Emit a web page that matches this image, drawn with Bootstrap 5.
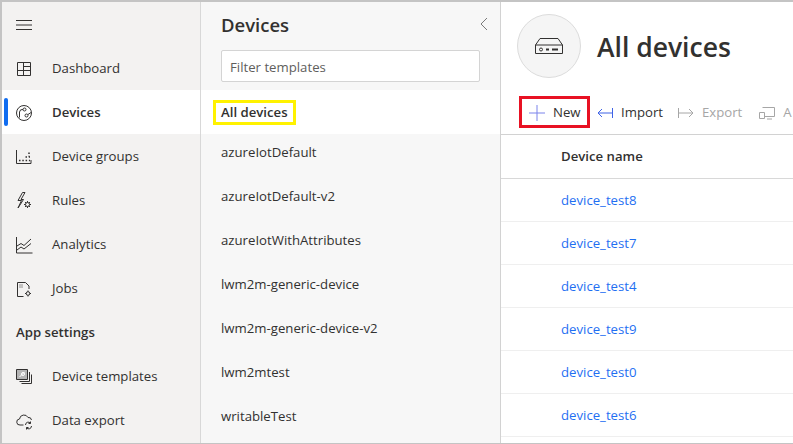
<!DOCTYPE html>
<html lang="en">
<head>
  <meta charset="UTF-8" />
  <title>All devices</title>
  <link href="https://cdn.jsdelivr.net/npm/bootstrap@5.3.0/dist/css/bootstrap.min.css" rel="stylesheet">
  <style>
    html, body { height: 100%; overflow: hidden; }
    body { font-family: "Open Sans", "Noto Sans", "Liberation Sans", sans-serif; font-size: 13.2px; color: #323130; background: #fff; }
    svg { display: block; fill: none; stroke: #323130; stroke-width: 1; }
    .app-frame { width: 793px; height: 444px; border: solid #c4c4c4; border-width: 2px 0 1px 2px; }
    .side-nav { width: 199px; background: #f3f2f1; border-right: 1px solid #d8d8d8; }
    .nav-item-row { height: 44px; padding: 2px 0 0 14px; gap: 18px; color: #323130; text-decoration: none; position: relative; }
    .nav-item-row.is-active { background: #fff; font-weight: 600; }
    .nav-item-row.is-active::before { content: ""; position: absolute; left: 2px; top: 8px; bottom: 8px; width: 4px; border-radius: 2px; background: #0f6cf0; }
    .nav-heading { height: 44px; padding: 2px 0 0 14px; font-weight: 600; }
    .menu-btn { height: 44px; padding: 2px 0 0 14px; }
    .icon-box { width: 18px; height: 18px; flex: none; }
    .template-panel { width: 300px; background: #f7f7f7; border-right: 1px solid #d2d2d2; overflow: hidden; }
    .panel-head { height: 88px; padding: 0 20px; position: relative; flex: none; }
    .panel-title { font-size: 18.5px; font-weight: 600; line-height: 24px; padding-top: 11px; margin: 0 0 13px; }
    .panel-collapse { position: absolute; right: 11px; top: 15px; }
    .filter-box { height: 32px; border-radius: 2px; border: 1px solid #d4d4d4; font-size: 13.2px; padding: 2px 8px 0; color: #605e5c; }
    .filter-box::placeholder { color: #605e5c; }
    .template-list { margin-top: -4px; }
    .template-row { height: 44px; padding: 2px 0 0 20px; color: #323130; flex: none; }
    .template-row.is-active { background: #fff; font-weight: 600; padding-left: 12px; position: relative; z-index: 1; padding-top: 0; }
    .yellow-outline { border: 3px solid #fff200; padding: 1px 5px; line-height: 17px; }
    .main-pane { min-width: 0; overflow: hidden; }
    .page-head { height: 88px; padding-left: 16px; gap: 16px; }
    .device-circle { width: 64px; height: 64px; border-radius: 50%; background: #f5f5f5; border: 1px solid #dcdcdc; margin-top: 12px; }
    .page-title { font-size: 26.5px; font-weight: 600; margin: 0; line-height: 34px; margin-top: 28px; }
    .tool-bar { height: 45px; border-bottom: 1px solid #d2d2d2; white-space: nowrap; padding: 0 0 0 18px; }
    .red-outline { border: 3px solid #e81123; height: 32px; width: 71px; flex: none; padding: 2px 0 0 7px; gap: 8px; }
    .tool-item { padding: 2px 0 0 7px; gap: 8px; flex: none; }
    .tool-item.is-off { color: #a6a6a6; padding-left: 15px; }
    .table-head { height: 44px; padding: 0 0 0 60px; font-weight: 600; border-bottom: 1px solid #d8d8d8; }
    .device-row { height: 43px; padding: 2px 0 0 60px; border-bottom: 1px solid #efefef; }
    .device-row a { color: #1f6ff2; text-decoration: none; }
  </style>
</head>
<body>
  <div class="app-frame d-flex">
    <nav class="side-nav d-flex flex-column flex-shrink-0">
      <div class="menu-btn d-flex align-items-center">
        <svg class="icon-box" viewBox="0 0 18 18"><path d="M0 4.500h16M0 9h16M0 13.500h16"/></svg>
      </div>
      <a class="nav-item-row d-flex align-items-center" href="#">
        <svg class="icon-box" viewBox="0 0 18 18"><path d="M1.500 2.500h13v13h-13zM7.500 2.500v13M7.500 6.500h7M1.500 10.500h13"/></svg>
        Dashboard
      </a>
      <a class="nav-item-row is-active d-flex align-items-center" href="#">
        <svg class="icon-box" viewBox="0 0 18 18"><circle cx="8" cy="9" r="7.500"/><circle cx="8.500" cy="5.500" r="1.500"/><circle cx="10.500" cy="11.500" r="1.500"/><path d="M3.500 13.500V8a3 3 0 0 1 3.500-2.500M12 10.500l3-2"/></svg>
        Devices
      </a>
      <a class="nav-item-row d-flex align-items-center" href="#">
        <svg class="icon-box" viewBox="0 0 18 18"><path d="M.5 2v13.500h14.500V12"/><path stroke-width="1.500" stroke-dasharray="1.500 1.800" d="M3 12.500h11M9.500 9h4.500M13 4.500v4"/></svg>
        Device groups
      </a>
      <a class="nav-item-row d-flex align-items-center" href="#">
        <svg class="icon-box" viewBox="0 0 18 18"><path d="M6.500 .5L2 8.500h3.500L2 16l5.500-8.500H5L9 .5z"/><circle cx="11.500" cy="12.500" r="2"/><path d="M11.500 9v1.500M11.500 14.500V16M8 12.500h1.500M13.500 12.500H15M9 10l1 1M13 14l1 1M14 10l-1 1M10 14l-1 1"/></svg>
        Rules
      </a>
      <a class="nav-item-row d-flex align-items-center" href="#">
        <svg class="icon-box" viewBox="0 0 18 18"><path d="M.5 1v16h16"/><path d="M1 10l4-2.500 3 2 7-6.500M1 14l4-3 3 2 7-5.500"/></svg>
        Analytics
      </a>
      <a class="nav-item-row d-flex align-items-center" href="#">
        <svg class="icon-box" viewBox="0 0 18 18"><path d="M7.500 16.500h-6v-14h8l3.500 3.500v3"/><path d="M3.500 5h4M3.500 7h4" stroke-dasharray="1 1"/><circle cx="12" cy="13.500" r="1.800"/><path d="M12 10.500v1.200M12 15.300v1.200M9 13.500h1.200M13.800 13.500H15"/></svg>
        Jobs
      </a>
      <div class="nav-heading d-flex align-items-center">App settings</div>
      <a class="nav-item-row d-flex align-items-center" href="#">
        <svg class="icon-box" viewBox="0 0 18 18"><path d="M.5 1.500h11v10H.5z" fill="#b5b5b5"/><path d="M13.500 4v9.500h-10M15.500 6.500v9h-10"/><path d="M3.500 9l5-5" stroke="#fff"/><circle cx="7" cy="6" r="1.500" stroke="#fff"/></svg>
        Device templates
      </a>
      <a class="nav-item-row d-flex align-items-center" href="#">
        <svg class="icon-box" viewBox="0 0 18 18"><path d="M7.500 13H4a3 3 0 0 1-.5-6A4.500 4.500 0 0 1 12 5.500a3 3 0 0 1 3.500 2.500"/><path d="M9.500 13a2.800 2.800 0 0 1 5-1.800M15.500 14a2.800 2.800 0 0 1-5 1.800M14.500 9.500v2h-2M10.500 17.500v-2h2"/></svg>
        Data export
      </a>
    </nav>

    <section class="template-panel d-flex flex-column flex-shrink-0">
      <div class="panel-head">
        <h2 class="panel-title">Devices</h2>
        <svg class="panel-collapse" width="10" height="14" viewBox="0 0 10 14"><path d="M8 1L2 7l6 6" stroke="#7a7a7a"/></svg>
        <input class="form-control filter-box" type="text" placeholder="Filter templates">
      </div>
      <div class="template-row is-active d-flex align-items-center"><span class="yellow-outline">All devices</span></div>
      <div class="template-list">
        <div class="template-row d-flex align-items-center">azureIotDefault</div>
        <div class="template-row d-flex align-items-center">azureIotDefault-v2</div>
        <div class="template-row d-flex align-items-center">azureIotWithAttributes</div>
        <div class="template-row d-flex align-items-center">lwm2m-generic-device</div>
        <div class="template-row d-flex align-items-center">lwm2m-generic-device-v2</div>
        <div class="template-row d-flex align-items-center">lwm2mtest</div>
        <div class="template-row d-flex align-items-center">writableTest</div>
      </div>
    </section>

    <main class="main-pane flex-grow-1">
      <div class="page-head d-flex">
        <div class="device-circle d-flex align-items-center justify-content-center flex-shrink-0">
          <svg width="30" height="20" viewBox="0 0 30 20"><path d="M6 2.500h18l4.500 6.500v8.500h-27V9zM1.500 9h27"/><circle cx="7" cy="13.500" r="1.500"/><path d="M12 13.500h3M18 13.500h6" stroke-width="2"/></svg>
        </div>
        <h1 class="page-title">All devices</h1>
      </div>
      <div class="tool-bar d-flex align-items-center">
        <div class="red-outline d-flex align-items-center">
          <svg width="16" height="16" viewBox="0 0 16 16"><path d="M8 0v16M0 8h16" stroke="#7b83eb"/></svg>
          New
        </div>
        <div class="tool-item d-flex align-items-center">
          <svg width="16" height="10" viewBox="0 0 16 10"><path d="M15.500 0v10M15 5H1M5 1L1 5l4 4" stroke="#3f63e6"/></svg>
          Import
        </div>
        <div class="tool-item is-off d-flex align-items-center">
          <svg width="16" height="10" viewBox="0 0 16 10"><path d="M.5 0v10M1 5h14M11 1l4 4-4 4" stroke="#a6a6a6"/></svg>
          Export
        </div>
        <div class="tool-item is-off d-flex align-items-center">
          <svg width="18" height="14" viewBox="0 0 18 14"><path d="M5.500 1.500h12v9H8M2.500 6.500h5v6h-5zM10 13h5" stroke="#a6a6a6"/></svg>
          A
        </div>
      </div>
      <div class="table-head d-flex align-items-center">Device name</div>
      <div class="device-row d-flex align-items-center"><a href="#">device_test8</a></div>
      <div class="device-row d-flex align-items-center"><a href="#">device_test7</a></div>
      <div class="device-row d-flex align-items-center"><a href="#">device_test4</a></div>
      <div class="device-row d-flex align-items-center"><a href="#">device_test9</a></div>
      <div class="device-row d-flex align-items-center"><a href="#">device_test0</a></div>
      <div class="device-row d-flex align-items-center"><a href="#">device_test6</a></div>
    </main>
  </div>
  <script src="https://cdn.jsdelivr.net/npm/bootstrap@5.3.0/dist/js/bootstrap.bundle.min.js"></script>
</body>
</html>
